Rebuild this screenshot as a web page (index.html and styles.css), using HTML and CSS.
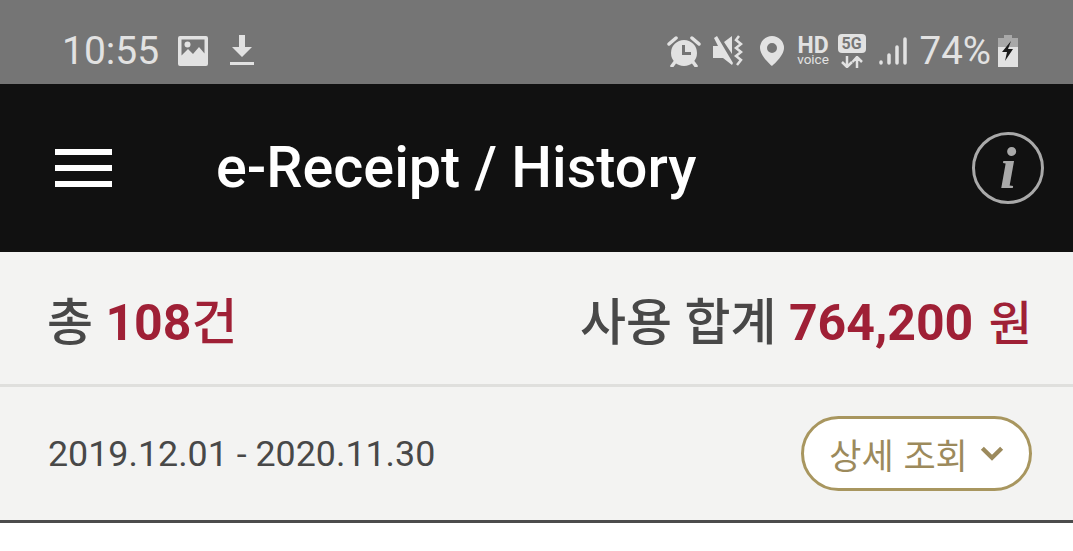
FILE: index.html
```html
<!DOCTYPE html>
<html lang="ko">
<head>
<meta charset="utf-8">
<title>e-Receipt / History</title>
<link rel="stylesheet" href="styles.css">
</head>
<body>
<div class="status">
  <div class="status-left">
    <span class="time">10:55</span>
    <svg class="ic-img" viewBox="0 0 30 30"><path fill-rule="evenodd" fill="#e2e2e2" d="M2 0H28a2 2 0 0 1 2 2V28a2 2 0 0 1-2 2H2a2 2 0 0 1-2-2V2a2 2 0 0 1 2-2ZM3.500 3.500V19.500L10 13 15 18 21 11 26.500 17.500V3.500Z"/><circle cx="9.500" cy="8.500" r="3" fill="#e2e2e2"/></svg>
    <svg class="ic-dl" viewBox="0 0 24 32"><path fill="#e2e2e2" d="M9 0H15V12H22L12 22 2 12H9ZM0 27H24V30H0Z"/></svg>
  </div>
  <div class="status-right">
    <svg class="ic-alarm" viewBox="0 0 34 32"><path fill="#e2e2e2" fill-rule="evenodd" d="M17 5a13 13 0 1 1 0 26 13 13 0 0 1 0-26ZM15 10V20H24V17H18V10Z"/><path stroke="#e2e2e2" stroke-width="3.500" stroke-linecap="round" d="M2 9 9 3M32 9 25 3M8 27 5 31M26 27 29 31"/></svg>
    <svg class="ic-mute" viewBox="0 0 32 32"><path fill="#e2e2e2" d="M1 11H6L2 3 5 1 21 28 20 30 11 23H1ZM12 7 20 1V19Z"/><path fill="none" stroke="#e2e2e2" stroke-width="2.500" d="M27 1 24 5 29 9 24 13 29 17 24 21 29 25 25 30"/></svg>
    <svg class="ic-pin" viewBox="0 0 24 30"><path fill="#e2e2e2" fill-rule="evenodd" d="M12 0A12 12 0 0 1 24 12C24 20 12 30 12 30S0 20 0 12A12 12 0 0 1 12 0ZM12 7a5 5 0 1 0 0 10 5 5 0 0 0 0-10Z"/></svg>
    <div class="hd"><span class="hd-top">HD</span><span class="hd-sub">voice</span></div>
    <div class="fiveg">
      <span class="fiveg-box">5G</span>
      <svg class="ic-arrows" viewBox="0 0 24 12"><path fill="none" stroke="#e2e2e2" stroke-width="2.500" d="M7 0V11M2 6 7 11 12 6M17 12V1M12.500 6 17 1 22 6"/></svg>
    </div>
    <svg class="ic-signal" viewBox="0 0 28 30"><path stroke="#e2e2e2" stroke-width="3.500" stroke-linecap="round" d="M2 27V26M10 27V19M18 27V11M26 27V3"/></svg>
    <span class="pct">74%</span>
    <svg class="ic-batt" viewBox="0 0 20 32"><path fill="#a8a8a8" d="M6 0H14V3H20V12H0V3H6Z"/><path fill="#e2e2e2" d="M0 12H20V32H0Z"/><path fill="#1a1a1a" d="M13 6 4 17H9L7 26 15 14H10Z"/></svg>
  </div>
</div>
<header class="appbar">
  <div class="burger"><span></span><span></span><span></span></div>
  <h1 class="title">e-Receipt / History</h1>
  <div class="info"><span class="info-i">i</span></div>
</header>
<section class="totals">
  <div class="count">총 <b class="red">108</b><span class="red unit">건</span></div>
  <div class="sum"><span class="sum-label">사용 합계</span> <b class="red">764,200</b> <span class="red unit won">원</span></div>
</section>
<section class="range">
  <span class="dates">2019.12.01 - 2020.11.30</span>
  <button class="detail">상세 조회<svg class="chev" viewBox="0 0 22 14"><path fill="none" stroke="#9c8a5c" stroke-width="4" d="M2 2 11 11 20 2"/></svg></button>
</section>
</body>
</html>
```

FILE: styles.css
```css
* { box-sizing: border-box; margin: 0; padding: 0; }
html, body { width: 1073px; height: 551px; overflow: hidden; background: #fff; }
body { font-family: Roboto, "Noto Sans CJK KR", sans-serif; }

.status {
  height: 84px;
  background: #757575;
  color: #e2e2e2;
  display: flex;
  justify-content: space-between;
  align-items: center;
  padding: 18px 55px 0 62px;
}
.status-left, .status-right { display: flex; align-items: center; }
.time { font-size: 39px; line-height: 40px; }
.ic-img { width: 30px; height: 30px; margin-left: 19px; }
.ic-dl { width: 24px; height: 32px; margin-left: 22px; }
.ic-alarm { width: 34px; height: 32px; }
.ic-mute { width: 32px; height: 32px; margin-left: 11px; }
.ic-pin { width: 24px; height: 30px; margin-left: 16px; }
.hd { display: flex; flex-direction: column; align-items: center; margin-left: 13px; width: 33px; color: #e2e2e2; }
.hd-top { font-size: 23px; font-weight: 700; line-height: 17px; }
.hd-sub { font-size: 13.500px; line-height: 11px; }
.fiveg { display: flex; flex-direction: column; align-items: center; margin-left: 8px; width: 28px; }
.fiveg-box { background: #e2e2e2; color: #757575; font-size: 16px; font-weight: 700; line-height: 19px; height: 19px; width: 28px; text-align: center; border-radius: 4px; }
.ic-arrows { width: 24px; height: 12px; margin-top: 3px; }
.ic-signal { width: 28px; height: 30px; margin-left: 13px; }
.pct { font-size: 38.500px; line-height: 40px; margin-left: 13px; }
.ic-batt { width: 20px; height: 32px; margin-left: 7px; }

.appbar {
  height: 168px;
  background: #111;
  display: flex;
  align-items: center;
  padding: 0 29px 0 55px;
}
.burger { width: 57px; display: flex; flex-direction: column; gap: 10px; }
.burger span { display: block; height: 6px; background: #fff; }
.title { flex: 1; margin-left: 104px; color: #fff; font-size: 57.500px; font-weight: 500; line-height: 60px; }
.info { width: 72px; height: 72px; border: 3px solid #a9a9a9; border-radius: 50%; display: flex; align-items: center; justify-content: center; }
.info-i { font-family: "Liberation Serif", serif; font-style: italic; font-weight: 700; font-size: 60px; line-height: 60px; color: #a9a9a9; }

.totals {
  height: 135px;
  background: #f3f3f2;
  border-bottom: 3px solid #dfdfdd;
  display: flex;
  justify-content: space-between;
  align-items: center;
  padding: 0 41px 0 47px;
  color: #484848;
  font-size: 50px;
  font-weight: 500;
}
.red { color: #9f2036; font-weight: 700; }
.unit { font-weight: 500; }
.won { font-size: 47px; margin-left: 3px; }

.range {
  height: 136px;
  background: #f3f3f2;
  border-bottom: 3px solid #4c4c4c;
  display: flex;
  justify-content: space-between;
  align-items: center;
  padding: 0 41px 0 48px;
}
.dates { font-size: 35.800px; color: #484848; }
.detail {
  width: 231px;
  height: 75px;
  border: 3px solid #a8965f;
  border-radius: 38px;
  background: #fff;
  color: #9c8a5c;
  font-family: "Noto Sans CJK KR", sans-serif;
  font-size: 35px;
  display: flex;
  align-items: center;
  justify-content: center;
  gap: 12px;
}
.chev { width: 24px; height: 15px; }
```
